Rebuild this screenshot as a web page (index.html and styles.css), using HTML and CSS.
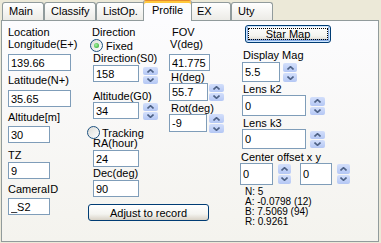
FILE: index.html
```html
<!DOCTYPE html>
<html lang="en">
<head>
    <meta charset="UTF-8">
    <title>Profile</title>
    <link rel="stylesheet" href="styles.css">
</head>
<body>
    <!-- tab strip -->
    <div class="tabs">
        <div class="tab w-main">Main</div>
        <div class="tab w-classify">Classify</div>
        <div class="tab w-listop">ListOp.</div>
        <div class="tab w-profile active">Profile</div>
        <div class="tab w-ex">EX</div>
        <div class="tab w-uty">Uty</div>
    </div>

    <div class="panel">
        <!-- location -->
        <div class="col col1">
            <div class="lbl">Location</div>
            <div class="lbl">Longitude(E+)</div>
            <input class="box w63 mt4" type="text" value="139.66">
            <div class="lbl mt3">Latitude(N+)</div>
            <input class="box w63 mt4" type="text" value="35.65">
            <div class="lbl mt4">Altitude[m]</div>
            <input class="box w42 mt3" type="text" value="30">
            <div class="lbl mt6">TZ</div>
            <input class="box w42 mt1" type="text" value="9">
            <div class="lbl mt4">CameraID</div>
            <input class="box w42 mt3" type="text" value="_S2">
        </div>

        <!-- direction -->
        <div class="col col2">
            <div class="lbl in5">Direction</div>
            <div class="radio-row mt1 in3"><span class="radio checked"></span>Fixed</div>
            <div class="lbl in6">Direction(S0)</div>
            <div class="spin-row mt1 in6 g4">
                <input class="box w46" type="text" value="158">
                <span class="spin mt2"><span><svg width="7" height="4"><path d="M0.5 3.5 L3.5 0.7 L6.5 3.5"/></svg></span><span><svg width="7" height="4"><path d="M0.5 0.5 L3.5 3.3 L6.5 0.5"/></svg></span></span>
            </div>
            <div class="lbl mt6 in6">Altitude(G0)</div>
            <div class="spin-row in6 g4">
                <input class="box w46" type="text" value="34">
                <span class="spin mt1"><span><svg width="7" height="4"><path d="M0.5 3.5 L3.5 0.7 L6.5 3.5"/></svg></span><span><svg width="7" height="4"><path d="M0.5 0.5 L3.5 3.3 L6.5 0.5"/></svg></span></span>
            </div>
            <div class="radio-row mt6 g2"><span class="radio"></span>Tracking</div>
            <div class="lbl in6 mtn2">RA(hour)</div>
            <input class="box w46 in6 mt1" type="text" value="24">
            <div class="lbl in6">Dec(deg)</div>
            <input class="box w46 in6 mt1" type="text" value="90">
            <button class="btn adjust mt7">Adjust to record</button>
        </div>

        <!-- field of view -->
        <div class="col col3">
            <div class="lbl in3">FOV</div>
            <div class="lbl in1">V(deg)</div>
            <input class="box w41 mt4" type="text" value="41.775">
            <div class="lbl in2">H(deg)</div>
            <div class="spin-row g1">
                <input class="box w39 h18" type="text" value="55.7">
                <span class="spin mt1"><span><svg width="7" height="4"><path d="M0.5 3.5 L3.5 0.7 L6.5 3.5"/></svg></span><span><svg width="7" height="4"><path d="M0.5 0.5 L3.5 3.3 L6.5 0.5"/></svg></span></span>
            </div>
            <div class="lbl in2 mt1">Rot(deg)</div>
            <div class="spin-row g2">
                <input class="box w38 h18" type="text" value="-9">
                <span class="spin h19"><span><svg width="7" height="4"><path d="M0.5 3.5 L3.5 0.7 L6.5 3.5"/></svg></span><span><svg width="7" height="4"><path d="M0.5 0.5 L3.5 3.3 L6.5 0.5"/></svg></span></span>
            </div>
        </div>

        <!-- star map / lens -->
        <div class="col col4">
            <button class="btn starmap">Star Map</button>
            <div class="lbl mt6 in1">Display Mag</div>
            <div class="spin-row mt1 g3">
                <input class="box w38 h20" type="text" value="5.5">
                <span class="spin w14 h19 mt1"><span><svg width="7" height="4"><path d="M0.5 3.5 L3.5 0.7 L6.5 3.5"/></svg></span><span><svg width="7" height="4"><path d="M0.5 0.5 L3.5 3.3 L6.5 0.5"/></svg></span></span>
            </div>
            <div class="lbl mt1 in1">Lens k2</div>
            <div class="spin-row g4">
                <input class="box w64 h21" type="text" value="0">
                <span class="spin h18 mt2"><span><svg width="7" height="4"><path d="M0.5 3.5 L3.5 0.7 L6.5 3.5"/></svg></span><span><svg width="7" height="4"><path d="M0.5 0.5 L3.5 3.3 L6.5 0.5"/></svg></span></span>
            </div>
            <div class="lbl mt1 in1">Lens k3</div>
            <div class="spin-row g4">
                <input class="box w64 h20" type="text" value="0">
                <span class="spin mt2"><span><svg width="7" height="4"><path d="M0.5 3.5 L3.5 0.7 L6.5 3.5"/></svg></span><span><svg width="7" height="4"><path d="M0.5 0.5 L3.5 3.3 L6.5 0.5"/></svg></span></span>
            </div>
            <div class="lbl mt2 inn1">Center offset x y</div>
            <div class="spin-row offset g5">
                <input class="box w33 h22" type="text" value="0">
                <span class="spin w13 h20 mt1"><span><svg width="7" height="4"><path d="M0.5 3.5 L3.5 0.7 L6.5 3.5"/></svg></span><span><svg width="7" height="4"><path d="M0.5 0.5 L3.5 3.3 L6.5 0.5"/></svg></span></span>
                <input class="box w32 h22 second" type="text" value="0">
                <span class="spin w13 h20 mt1"><span><svg width="7" height="4"><path d="M0.5 3.5 L3.5 0.7 L6.5 3.5"/></svg></span><span><svg width="7" height="4"><path d="M0.5 0.5 L3.5 3.3 L6.5 0.5"/></svg></span></span>
            </div>
            <div class="stats">
                <div>N: 5</div>
                <div>A: -0.0798 (12)</div>
                <div>B: 7.5069 (94)</div>
                <div>R: 0.9261</div>
            </div>
        </div>
    </div>
</body>
</html>
```

FILE: styles.css
```css
body {
    margin: 0;
    background: #ece9d8;
    font-family: "Liberation Sans", Arial, sans-serif;
    font-size: 11px;
    color: #000;
    overflow: hidden;
}

/* tabs */
.tabs {
    display: flex;
    align-items: flex-end;
    height: 20px;
    padding-left: 2px;
}

.tab {
    position: relative;
    box-sizing: border-box;
    height: 18px;
    padding-left: 6px;
    line-height: 16px;
    border: 1px solid #919b9c;
    border-bottom: none;
    border-radius: 3px 3px 0 0;
    background: linear-gradient(#ffffff, #ecebe6);
    white-space: nowrap;
}

.tab.active {
    z-index: 2;
    height: 21px;
    margin: 0 -2px -1px;
    padding-left: 8px;
    border-top: 1px solid #e68b2c;
    box-shadow: inset 0 2px 0 #ffc83c;
    background: #fcfcfe;
    line-height: 18px;
}

.w-main { width: 42px; }
.w-classify { width: 52px; }
.w-listop { width: 49px; }
.w-profile { width: 49px; }
.w-ex { width: 41px; }
.w-uty { width: 42px; }

/* tab page */
.panel {
    position: relative;
    z-index: 1;
    display: flex;
    box-sizing: border-box;
    width: 378px;
    height: 222px;
    margin-left: 1px;
    border: 1px solid #919b9c;
    background: linear-gradient(#fcfcfe, #f4f3ee);
}

.col {
    flex: none;
    padding-top: 5px;
}

.col1 { width: 79px; margin-left: 6px; }
.col2 { width: 82px; }
.col3 { width: 73px; }
.col4 { padding-top: 4px; }

.lbl {
    height: 12px;
    line-height: 12px;
    white-space: nowrap;
}

.box {
    display: block;
    box-sizing: border-box;
    height: 17px;
    margin: 0;
    padding: 0 2px;
    border: 1px solid #7f9db9;
    background: #fff;
    font: inherit;
    color: #000;
    outline: none;
}

.w32 { width: 32px; }
.w33 { width: 33px; }
.w38 { width: 38px; }
.w39 { width: 39px; }
.w41 { width: 41px; }
.w42 { width: 42px; }
.w46 { width: 46px; }
.w63 { width: 63px; }
.w64 { width: 64px; }

.box.h18 { height: 18px; }
.box.h20 { height: 20px; }
.box.h21 { height: 21px; }
.box.h22 { height: 22px; }

/* spacing helpers */
.mt1 { margin-top: 1px; }
.mt2 { margin-top: 2px; }
.mt3 { margin-top: 3px; }
.mt4 { margin-top: 4px; }
.mt6 { margin-top: 6px; }
.mt7 { margin-top: 7px; }
.mtn2 { margin-top: -2px; }
.in1 { margin-left: 1px; }
.in2 { margin-left: 2px; }
.in3 { margin-left: 3px; }
.in5 { margin-left: 5px; }
.in6 { margin-left: 6px; }
.inn1 { margin-left: -1px; }

/* radio buttons */
.radio-row {
    display: flex;
    align-items: center;
    gap: 3px;
    height: 13px;
    white-space: nowrap;
}

.radio-row.g2 { gap: 2px; }

.radio {
    position: relative;
    flex: none;
    box-sizing: border-box;
    width: 13px;
    height: 13px;
    border: 1px solid #1c5180;
    border-radius: 50%;
    background: linear-gradient(135deg, #dcdcd7, #ffffff);
}

.radio.checked::after {
    content: "";
    position: absolute;
    left: 3px;
    top: 3px;
    width: 5px;
    height: 5px;
    border-radius: 50%;
    background: radial-gradient(circle at 40% 40%, #a6f2a2, #21a121);
}

/* textbox + up/down */
.spin-row {
    display: flex;
    align-items: flex-start;
}

.g1 { gap: 1px; }
.g2 { gap: 2px; }
.g3 { gap: 3px; }
.g4 { gap: 4px; }
.g5 { gap: 5px; }

.spin {
    display: flex;
    flex-direction: column;
    gap: 1px;
    flex: none;
    width: 15px;
    height: 17px;
}

.spin.w13 { width: 13px; }
.spin.w14 { width: 14px; }
.spin.h18 { height: 18px; }
.spin.h19 { height: 19px; }
.spin.h20 { height: 20px; }

.spin > span {
    flex: 1;
    display: flex;
    align-items: center;
    justify-content: center;
    border-radius: 2px;
    background: linear-gradient(#d3dffb, #b4c7f4);
}

.spin svg path {
    fill: none;
    stroke: #4d6185;
    stroke-width: 1.6;
}

.offset { margin-left: -2px; }
.offset .second { margin-left: 4px; }

/* buttons */
.btn {
    display: block;
    box-sizing: border-box;
    padding: 0;
    border: 1px solid #003c74;
    border-radius: 3px;
    background: linear-gradient(#ffffff, #f4f4f0 60%, #d8d2c6);
    font: inherit;
    color: #000;
}

.adjust {
    width: 121px;
    height: 17px;
    margin-left: 1px;
}

.starmap {
    position: relative;
    width: 86px;
    height: 18px;
    margin-left: 3px;
    box-shadow: inset 0 0 0 1px #cee7ff, inset 0 -1px 0 2px #89ade4;
}

.starmap::after {
    content: "";
    position: absolute;
    left: 2px;
    top: 2px;
    right: 2px;
    bottom: 2px;
    border: 1px dotted #000;
}

.stats {
    margin: 2px 0 0 3px;
    font-size: 10px;
    line-height: 10px;
    white-space: nowrap;
}
```
